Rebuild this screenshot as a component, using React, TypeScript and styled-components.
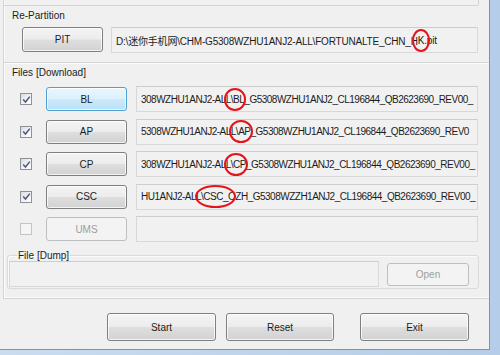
import React from "react";
import styled, { createGlobalStyle, css } from "styled-components";

const GlobalStyle = createGlobalStyle`
  html, body {
    margin: 0;
    padding: 0;
    background: #f0f0f0;
  }
  body {
    font-family: "Liberation Sans", "Noto Sans CJK SC", sans-serif;
    font-size: 10px;
    color: #1c1c1c;
  }
`;

const LINE = "#d4d4d4";

const Window = styled.div`
  width: 500px;
  height: 355px;
  overflow: hidden;
  background: linear-gradient(90deg, #c9dcf0 0%, #b5cde8 100%);
`;

const Client = styled.div`
  width: 489px;
  height: 349px;
  background: #f0f0f0;
  border-right: 1px solid #8d9196;
  border-bottom: 1px solid #8d9196;
`;

const Panel = styled.div`
  margin-left: 3px;
  border-left: 1px solid ${LINE};
  border-bottom: 1px solid ${LINE};
  box-shadow: inset 1px -1px 0 #fbfbfb;
  padding-bottom: 9px;
`;

const TopCap = styled.div`
  width: 474px;
  height: 5px;
  border-right: 1px solid ${LINE};
  border-bottom: 1px solid ${LINE};
  border-bottom-right-radius: 2px;
`;

const Section = styled.div<{ $divider?: boolean }>`
  padding-top: 4px;
  ${(p) =>
    p.$divider &&
    css`
      padding-bottom: 10px;
      border-bottom: 1px solid ${LINE};
      box-shadow: 0 1px 0 #fbfbfb;
    `}
`;

const Caption = styled.div`
  padding-left: 8px;
  line-height: 12px;
  height: 12px;
`;

const PitRow = styled.div`
  display: flex;
  gap: 8px;
  margin-top: 5px;
  padding-left: 18px;
  height: 25px;
`;

const Rows = styled.div`
  display: flex;
  flex-direction: column;
  gap: 6.5px;
  margin-top: 7px;
`;

const FileRow = styled.div`
  display: flex;
  align-items: center;
  height: 26px;
  padding-left: 16px;
`;

const Button = styled.button<{ $w: number; $h: number; $hot?: boolean; $gapLeft?: number }>`
  box-sizing: border-box;
  flex: none;
  width: ${(p) => p.$w}px;
  height: ${(p) => p.$h}px;
  margin: 0 0 0 ${(p) => p.$gapLeft ?? 0}px;
  padding: 0;
  font-family: inherit;
  font-size: 10px;
  color: #1c1c1c;
  border: 1px solid #7f7f7f;
  border-radius: 3px;
  background: linear-gradient(180deg, #f4f4f4 0%, #ececec 48%, #dedede 52%, #d2d2d2 100%);
  box-shadow: inset 0 0 0 1px rgba(255, 255, 255, 0.75);
  ${(p) =>
    p.$hot &&
    css`
      border-color: #4fa0d2;
      background: linear-gradient(180deg, #eaf6fd 0%, #dcf1fc 48%, #cbeafb 52%, #b9e1f7 100%);
    `}
  &:disabled {
    color: #9e9e9e;
    border-color: #bcbfc1;
    background: #f3f3f3;
    box-shadow: none;
  }
`;

const Field = styled.div<{ $w: number; $gapLeft?: number; $track?: number }>`
  box-sizing: border-box;
  flex: none;
  width: ${(p) => p.$w}px;
  height: 26px;
  margin-left: ${(p) => p.$gapLeft ?? 0}px;
  display: flex;
  align-items: center;
  padding-left: 4px;
  overflow: hidden;
  white-space: nowrap;
  background: #f1f1f1;
  border: 1px solid #d8d8d8;
  border-top-color: #cdcdcd;
  letter-spacing: ${(p) => p.$track ?? -0.5}px;
`;

const Mark = styled.span<{ $px: number }>`
  position: relative;
  &::after {
    content: "";
    position: absolute;
    top: -6px;
    bottom: -6px;
    left: -${(p) => p.$px}px;
    right: -${(p) => p.$px}px;
    border: 2.5px solid #e3141c;
    border-radius: 50%;
  }
`;

const Check = styled.span<{ $off?: boolean }>`
  box-sizing: border-box;
  flex: none;
  width: 12px;
  height: 12px;
  margin-right: 14px;
  display: flex;
  align-items: center;
  justify-content: center;
  border: 1px solid ${(p) => (p.$off ? "#c4c4c4" : "#8f9194")};
  background: ${(p) =>
    p.$off ? "#f5f5f5" : "linear-gradient(135deg, #dadbe0 0%, #f4f4f6 60%, #ffffff 100%)"};
`;

const CheckMark = () => (
  <svg width="9" height="9" viewBox="0 0 9 9">
    <path d="M1.2 4.6 L3.5 7 L7.8 1.6" fill="none" stroke="#4a5a8a" strokeWidth="1.5" />
  </svg>
);

const DumpGroup = styled.fieldset`
  box-sizing: border-box;
  width: 472px;
  margin: 8px 0 0 3px;
  padding: 0 8px 1px 1px;
  border: 1px solid #dadada;
  border-radius: 3px;
  box-shadow: inset 1px 1px 0 #fafafa;
  display: flex;
  align-items: center;
  gap: 8px;
`;

const Legend = styled.legend`
  margin-left: 8px;
  padding: 0 1px;
  line-height: 11px;
`;

const ButtonBar = styled.div`
  display: flex;
  gap: 10px;
  margin-top: 14px;
  padding-left: 107px;
`;

type FileEntry = {
  name: string;
  on: boolean;
  hot?: boolean;
  pre?: string;
  mark?: string;
  post?: string;
  px?: number;
};

const files: FileEntry[] = [
  {
    name: "BL",
    on: true,
    hot: true,
    pre: "308WZHU1ANJ2-AL",
    mark: "L\\BL",
    post: "_G5308WZHU1ANJ2_CL196844_QB2623690_REV00_",
    px: 2,
  },
  {
    name: "AP",
    on: true,
    pre: "5308WZHU1ANJ2-AL",
    mark: "L\\AP",
    post: "_G5308WZHU1ANJ2_CL196844_QB2623690_REV0",
    px: 2,
  },
  {
    name: "CP",
    on: true,
    pre: "308WZHU1ANJ2-AL",
    mark: "L\\CP",
    post: "_G5308WZHU1ANJ2_CL196844_QB2623690_REV00_",
    px: 2,
  },
  {
    name: "CSC",
    on: true,
    pre: "HU1ANJ2-AL",
    mark: "L\\CSC_O",
    post: "ZH_G5308WZZH1ANJ2_CL196844_QB2623690_REV00_",
    px: 1,
  },
  { name: "UMS", on: false },
];

export default function App(): JSX.Element {
  return (
    <>
      <GlobalStyle />
      <Window>
        <Client>
          <Panel>
            <TopCap />
            <Section $divider>
              <Caption>Re-Partition</Caption>
              <PitRow>
                <Button $w={81} $h={25}>PIT</Button>
                <Field $w={367} $track={-0.2}>
                  D:\迷你手机网\CHM-G5308WZHU1ANJ2-ALL\FORTUNALTE_CHN_H
                  <Mark $px={6}>K</Mark>.pit
                </Field>
              </PitRow>
            </Section>
            <Section>
              <Caption>Files [Download]</Caption>
              <Rows>
                {files.map((f) => (
                  <FileRow key={f.name}>
                    <Check $off={!f.on}>{f.on && <CheckMark />}</Check>
                    <Button $w={81} $h={24} $hot={f.hot} disabled={!f.on}>
                      {f.name}
                    </Button>
                    <Field $w={342} $gapLeft={9}>
                      {f.pre}
                      {f.mark && <Mark $px={f.px ?? 1}>{f.mark}</Mark>}
                      {f.post}
                    </Field>
                  </FileRow>
                ))}
              </Rows>
            </Section>
            <DumpGroup>
              <Legend>File [Dump]</Legend>
              <Field $w={370} />
              <Button $w={82} $h={23} disabled>
                Open
              </Button>
            </DumpGroup>
          </Panel>
          <ButtonBar>
            <Button $w={109} $h={28}>Start</Button>
            <Button $w={108} $h={28}>Reset</Button>
            <Button $w={109} $h={28} $gapLeft={16}>Exit</Button>
          </ButtonBar>
        </Client>
      </Window>
    </>
  );
}
